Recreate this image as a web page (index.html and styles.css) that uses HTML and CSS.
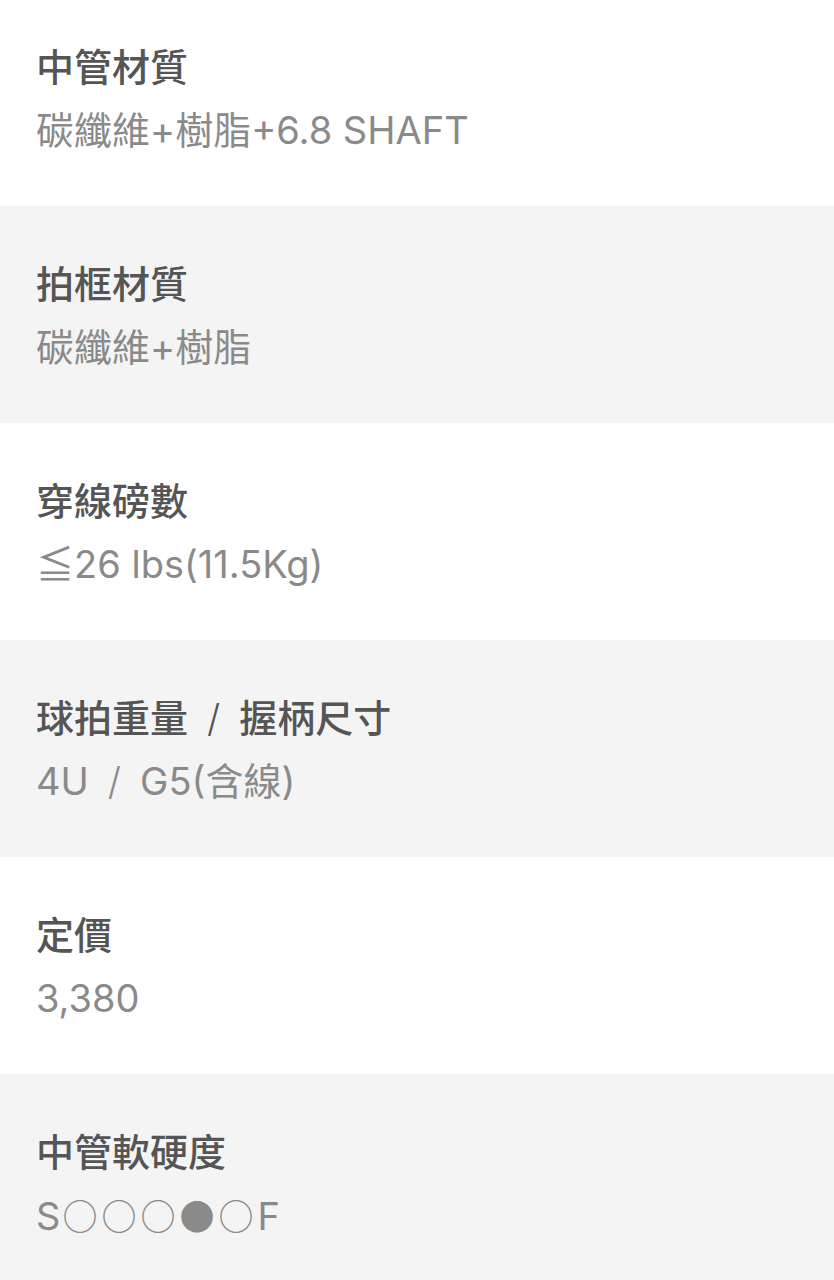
FILE: index.html
```html
<!DOCTYPE html>
<html>
<head>
    <meta charset="utf-8">
    <title>球拍規格</title>
    <link rel="stylesheet" href="styles.css">
</head>
<body>
    <div class="spec-list">
        <div class="spec-row">
            <div class="spec-label">中管材質</div>
            <div class="spec-value">碳纖維+樹脂+6.8 SHAFT</div>
        </div>
        <div class="spec-row alt">
            <div class="spec-label">拍框材質</div>
            <div class="spec-value">碳纖維+樹脂</div>
        </div>
        <div class="spec-row">
            <div class="spec-label">穿線磅數</div>
            <div class="spec-value">≦26 lbs(11.5Kg)</div>
        </div>
        <div class="spec-row alt">
            <div class="spec-label">球拍重量<span class="sep">/</span>握柄尺寸</div>
            <div class="spec-value">4U<span class="sep">/</span>G5(含線)</div>
        </div>
        <div class="spec-row">
            <div class="spec-label">定價</div>
            <div class="spec-value">3,380</div>
        </div>
        <div class="spec-row alt">
            <div class="spec-label">中管軟硬度</div>
            <div class="spec-value">S<span class="dots">○○○●○</span>F</div>
        </div>
    </div>
</body>
</html>
```

FILE: styles.css
```css
:root {
    --label-color: #555555;
    --value-color: #8a8a8a;
    --alt-bg: #f4f4f4;
}

* {
    box-sizing: border-box;
    margin: 0;
    padding: 0;
}

body {
    font-family: 'Inter', 'Noto Sans CJK TC', sans-serif;
    background-color: #ffffff;
    overflow: hidden;
}

.spec-list {
    display: flex;
    flex-direction: column;
}

.spec-row {
    height: 217px;
    padding: 54px 36px 0;
    display: flex;
    flex-direction: column;
    gap: 15px;
    background-color: #ffffff;
}

.spec-row:first-child {
    height: 206px;
    padding-top: 43px;
}

.spec-row.alt {
    background-color: var(--alt-bg);
}

.spec-label,
.spec-value {
    font-size: 38px;
    line-height: 48px;
    white-space: nowrap;
}

.spec-label {
    color: var(--label-color);
    font-weight: 500;
}

.spec-value {
    color: var(--value-color);
    font-weight: 400;
}

.sep {
    display: inline-block;
    padding: 0 19px;
    font-weight: 300;
}

.dots {
    font-family: 'Noto Sans CJK TC', sans-serif;
    font-size: 35px;
    letter-spacing: 4px;
    margin-left: 2px;
}
```
